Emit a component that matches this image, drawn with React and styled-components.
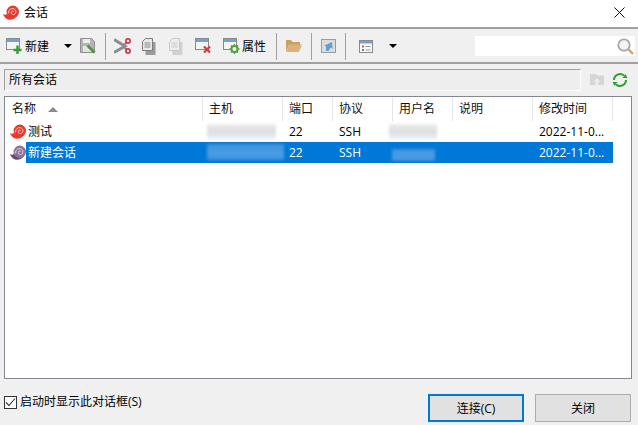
import React from "react";
import styled, { createGlobalStyle } from "styled-components";

const Global = createGlobalStyle`
  html, body { margin: 0; padding: 0; background: #f0f0f0; }
  body { font-family: "Open Sans", "Noto Sans CJK SC", sans-serif; font-size: 12px; color: #000; }
  * { box-sizing: border-box; }
`;
const Dialog = styled.div`
  width: 638px; height: 425px; display: flex; flex-direction: column; overflow: hidden; background: #f0f0f0;
`;
const TitleBar = styled.div`
  height: 29px; flex: none; background: #fff; border-bottom: 2px solid #a0a0a0;
  display: flex; align-items: center; padding: 0 13px 2px 3px; gap: 5px;
`;
const TitleText = styled.span`font-size: 12px; line-height: 16px; flex: 1;`;
const Toolbar = styled.div`
  height: 35px; flex: none; display: flex; align-items: center; padding: 1px 3px 0 4px;
  border-bottom: 2px solid #a0a0a0;
`;
const Slot = styled.div`
  width: ${p => p.$w}px; height: 24px; flex: none; display: flex; align-items: center;
  justify-content: ${p => (p.$left ? "flex-start" : "center")};
  padding-left: ${p => p.$left || 0}px; gap: 2px;
`;
const Sep = styled.div`
  width: 1px; height: 27px; flex: none; background: #a0a0a0; margin-left: ${p => p.$ml || 0}px;
`;
const Caret = styled.div`
  width: 0; height: 0; border-left: 4px solid transparent; border-right: 4px solid transparent; border-top: 4px solid #000;
`;
const Search = styled.div`
  margin-left: auto; width: 160px; height: 20px; background: #fff; display: flex; align-items: center; justify-content: flex-end; padding-right: 1px;
`;
const PathRow = styled.div`
  flex: none; display: flex; align-items: center; padding: 4px 0 0 4px; height: 28px;
`;
const PathBox = styled.div`
  width: 577px; height: 22px; border: 1px solid; border-color: #a0a0a0 #fff #fff #a0a0a0;
  display: flex; align-items: center; padding-left: 4px; background: #eeeeee; line-height: 18px;
`;
const PathIcons = styled.div`
  display: flex; align-items: center; margin-left: 9px; gap: 7px;
`;
const Table = styled.div`
  flex: none; margin: 4px 6px 0 4px; height: 283px; background: #fff; border: 1px solid #828790;
`;
const cols = "198px 80px 50px 60px 60px 80px 80px";
const HeadRow = styled.div`
  display: grid; grid-template-columns: ${cols}; height: 24px;
`;
const HeadCell = styled.div`
  border-right: 1px solid #e5e5e5; padding-left: ${p => p.$pad || 6}px; display: flex; align-items: center; gap: 12px; line-height: 16px; color: #111;
`;
const SortArrow = styled.div`
  width: 0; height: 0; border-left: 5px solid transparent; border-right: 5px solid transparent; border-bottom: 5px solid #8a8a8a;
`;
const Row = styled.div`
  display: grid; grid-template-columns: ${cols}; height: 21px;
`;
const NameCell = styled.div`
  display: flex; align-items: center; padding-left: 5px;
`;
const NameLabel = styled.div`
  flex: 1; height: 21px; line-height: 21px; padding-left: 2px;
  background: ${p => (p.$sel ? "#0078d7" : "transparent")};
  color: ${p => (p.$sel ? "#fff" : "#000")};
`;
const Cell = styled.div`
  height: 21px; line-height: 21px; padding-left: 6px; overflow: hidden; white-space: nowrap;
  background: ${p => (p.$sel ? "#0078d7" : "transparent")};
  color: ${p => (p.$sel ? "#fff" : "#000")};
`;
const BlurCell = styled(Cell)`
  padding: ${p => p.$top}px 0 0 0; overflow: visible;
`;
const Smudge = styled.div`
  width: ${p => p.$w}px; height: ${p => p.$h}px; margin-left: ${p => p.$x}px; filter: blur(1.5px);
  background: ${p => p.$sel
    ? "linear-gradient(180deg,#3f94dd,#4a9ce4 60%,#3b93de)"
    : "linear-gradient(180deg,#ededed,#dcdcdc 55%,#e8eef5 85%,#dfeefa)"};
`;
const Footer = styled.div`
  flex: 1; display: flex; align-items: flex-start; padding: 15px 7px 0 4px;
`;
const CheckLine = styled.label`
  display: flex; align-items: center; gap: 3px; margin-top: 0; flex: 1; line-height: 16px;
`;
const CheckBox = styled.div`
  width: 13px; height: 13px; border: 1px solid #333; background: #fff; display: flex; align-items: center; justify-content: center;
`;
const Button = styled.div`
  width: 96px; height: 28px; display: flex; align-items: center; justify-content: center;
  background: #e1e1e1; margin-left: ${p => p.$ml || 0}px;
  border: ${p => (p.$primary ? "2px solid #0078d7" : "1px solid #adadad")};
`;

const Snail = ({ c = "#e8392f", d = "#e8392f" }) => (
  <svg width="16" height="16" viewBox="0 0 16 16" style={{ flex: "none" }}>
    <path d="M0 9C1.8 10.2 3.2 9.8 4 8.4 5 11.4 8.6 13.2 13.4 11.6 10 16.4 2.4 16.2 0 9Z" fill={d} />
    <circle cx="9.8" cy="6.8" r="6.2" fill={c} />
    <path d="M5.6 8.4C5.2 4.8 8.2 3 10.8 3.8 13.2 4.6 13.6 7.6 11.8 9 10.2 10.2 8 9.2 8.2 7.4 8.4 6 10 5.6 10.8 6.6" fill="none" stroke="#fff" strokeWidth=".7" />
  </svg>
);
const Win = ({ children }) => (
  <svg width="17" height="16" viewBox="0 0 17 16" style={{ flex: "none" }}>
    <rect x=".5" y=".5" width="13" height="11" fill="#f4f4f4" stroke="#8a8a8a" />
    <rect x="1" y="1" width="12" height="3" fill="#6ea3d8" />
    {children}
  </svg>
);
const NewIcon = () => <Win><path d="M11.5 7.5v8.5M7.5 12h8" stroke="#2f9e2f" strokeWidth="2.4" /></Win>;
const DelIcon = () => <Win><path d="M9 8.5l6 6M15 8.5l-6 6" stroke="#d93a3a" strokeWidth="2.2" /></Win>;
const PropIcon = () => (
  <Win>
    <circle cx="11.5" cy="11" r="3" fill="#fff" stroke="#4fa33c" strokeWidth="2" />
    <path d="M11.5 6v2M11.5 14v2M6.5 11h2M14.5 11h2M8 7.5l1.4 1.4M13.6 13.1L15 14.5M15 7.5l-1.4 1.4M9.4 13.1L8 14.5" stroke="#4fa33c" strokeWidth="1.5" />
  </Win>
);
const SaveIcon = () => (
  <svg width="16" height="16" viewBox="0 0 16 16">
    <path d="M.5.5h11l3 3v11H.5z" fill="#b4b4b4" stroke="#8f8f8f" />
    <rect x="3" y="1" width="7" height="4" fill="#ececec" />
    <rect x="3" y="8" width="8" height="6" fill="#e4e4e4" />
    <path d="M7.5 7.5l7 7" stroke="#4d9b3a" strokeWidth="2.8" />
  </svg>
);
const CutIcon = () => (
  <svg width="17" height="16" viewBox="0 0 17 16">
    <path d="M0 1.5l11 6.7L0 14.5" fill="none" stroke="#8c8c8c" strokeWidth="3" />
    <path d="M9 8l3.5-3.5M9 8l3.5 3.5" stroke="#8c8c8c" strokeWidth="2.2" />
    <circle cx="14" cy="3" r="2.1" fill="#fff" stroke="#d8343a" strokeWidth="1.7" />
    <circle cx="14" cy="13" r="2.1" fill="#fff" stroke="#d8343a" strokeWidth="1.7" />
  </svg>
);
const CopyIcon = ({ dim }) => (
  <svg width="14" height="17" viewBox="0 0 14 17" opacity={dim ? 0.35 : 1}>
    <path d="M3.5 4h10v13h-10z" fill="#9a9a9a" />
    <path d="M3.5.5H10.5v12h-10V3.5z" fill="#e8e8e8" stroke="#7c7c7c" />
    <path d="M2.5 5h6M2.5 7h6M2.5 9h6" stroke="#8a8a8a" />
  </svg>
);
const FolderIcon = () => (
  <svg width="16" height="14" viewBox="0 0 16 14">
    <path d="M0 1h5l1.5 2H14v3H3L0 12z" fill="#c9a065" />
    <path d="M3 5.5h13L13 13H0z" fill="#dcb27a" />
  </svg>
);
const ShortcutIcon = () => (
  <svg width="15" height="14" viewBox="0 0 15 14">
    <rect x=".5" y=".5" width="14" height="13" fill="#dcdcdc" stroke="#9c9c9c" />
    <path d="M5 12V7.5L3.5 6.5 11 3l.5 7-2-1.5-2 3.5z" fill="#5f9fd8" />
  </svg>
);
const ListIcon = () => (
  <svg width="14" height="13" viewBox="0 0 14 13">
    <rect x=".5" y=".5" width="13" height="12" fill="#fafafa" stroke="#8a8a8a" />
    <rect x="1" y="1" width="12" height="2.5" fill="#6ea3d8" />
    <rect x="3" y="5.5" width="2" height="2" fill="#e05555" />
    <rect x="3" y="9" width="2" height="2" fill="#3aa04a" />
    <path d="M6.5 6.5h5M6.5 10h5" stroke="#999" />
  </svg>
);
const MagIcon = () => (
  <svg width="17" height="17" viewBox="0 0 17 17">
    <circle cx="7" cy="7" r="5.7" fill="#f5f5f5" stroke="#a8a8a8" strokeWidth="1.8" />
    <path d="M11.5 11.5l4.5 4.5" stroke="#d0a070" strokeWidth="2.4" />
  </svg>
);
const UploadFolder = () => (
  <svg width="15" height="15" viewBox="0 0 15 15">
    <path d="M0 1h6l1.5 1.5H14V12H0z" fill="#d6d6d6" />
    <path d="M7 5l3.5 4H8.5v5h-3V9h-2z" fill="#ececec" />
  </svg>
);
const RefreshIcon = () => (
  <svg width="16" height="16" viewBox="0 0 16 16" fill="none">
    <path d="M2 8a6 6 0 0 1 10-4.4" stroke="#2e9e2e" strokeWidth="2" />
    <path d="M14 8a6 6 0 0 1-10 4.4" stroke="#2e9e2e" strokeWidth="2" />
    <path d="M10.5 6h5l-2-4z" fill="#2e9e2e" />
    <path d="M5.5 10h-5l2 4z" fill="#2e9e2e" />
  </svg>
);
const CloseIcon = () => (
  <svg width="11" height="11" viewBox="0 0 11 11">
    <path d="M.5.5l10 10M10.5.5l-10 10" stroke="#111" />
  </svg>
);

const headers = [["名称", 7], ["主机"], ["端口"], ["协议"], ["用户名"], ["说明"], ["修改时间"]];

const SessionRow = ({ name, sel, c, d, hostW, hostH, hostTop, userX, userW, userH, userTop }) => (
  <Row>
    <NameCell><Snail c={c} d={d} /><NameLabel $sel={sel}>{name}</NameLabel></NameCell>
    <BlurCell $sel={sel} $top={hostTop}><Smudge $sel={sel} $x={4} $w={hostW} $h={hostH} /></BlurCell>
    <Cell $sel={sel}>22</Cell>
    <Cell $sel={sel}>SSH</Cell>
    <BlurCell $sel={sel} $top={userTop}><Smudge $sel={sel} $x={userX} $w={userW} $h={userH} /></BlurCell>
    <Cell $sel={sel} />
    <Cell $sel={sel}>2022-11-0...</Cell>
  </Row>
);

export default function App() {
  return (
    <Dialog>
      <Global />
      <TitleBar>
        <Snail />
        <TitleText>会话</TitleText>
        <CloseIcon />
      </TitleBar>
      <Toolbar>
        <Slot $w={53} $left={2}><NewIcon /><span>新建</span></Slot>
        <Slot $w={21}><Caret /></Slot>
        <Slot $w={19}><SaveIcon /></Slot>
        <Sep $ml={8} />
        <Slot $w={32}><CutIcon /></Slot>
        <Slot $w={21}><CopyIcon /></Slot>
        <Slot $w={33}><CopyIcon dim /></Slot>
        <Slot $w={23}><DelIcon /></Slot>
        <Slot $w={61} $left={8}><PropIcon /><span>属性</span></Slot>
        <Sep />
        <Slot $w={34}><FolderIcon /></Slot>
        <Sep />
        <Slot $w={33}><ShortcutIcon /></Slot>
        <Sep />
        <Slot $w={40}><ListIcon /></Slot>
        <Slot $w={13}><Caret /></Slot>
        <Search><MagIcon /></Search>
      </Toolbar>
      <PathRow>
        <PathBox>所有会话</PathBox>
        <PathIcons><UploadFolder /><RefreshIcon /></PathIcons>
      </PathRow>
      <Table>
        <HeadRow>
          {headers.map(([t, pad], i) => (
            <HeadCell key={t} $pad={pad}>{t}{i === 0 && <SortArrow />}</HeadCell>
          ))}
        </HeadRow>
        <SessionRow name="测试" c="#e8392f" d="#e8392f" hostW={69} hostH={15} hostTop={3} userX={-4} userW={48} userH={15} userTop={3} />
        <SessionRow name="新建会话" sel c="#8e7196" d="#5e4a6a" hostW={77} hostH={16} hostTop={2} userX={-1} userW={43} userH={12} userTop={7} />
      </Table>
      <Footer>
        <CheckLine>
          <CheckBox>
            <svg width="11" height="11" viewBox="0 0 11 11"><path d="M1 5.5l3 3 6-7" fill="none" stroke="#333" strokeWidth="1.1" /></svg>
          </CheckBox>
          启动时显示此对话框(S)
        </CheckLine>
        <Button $primary>连接(C)</Button>
        <Button $ml={11}>关闭</Button>
      </Footer>
    </Dialog>
  );
}
